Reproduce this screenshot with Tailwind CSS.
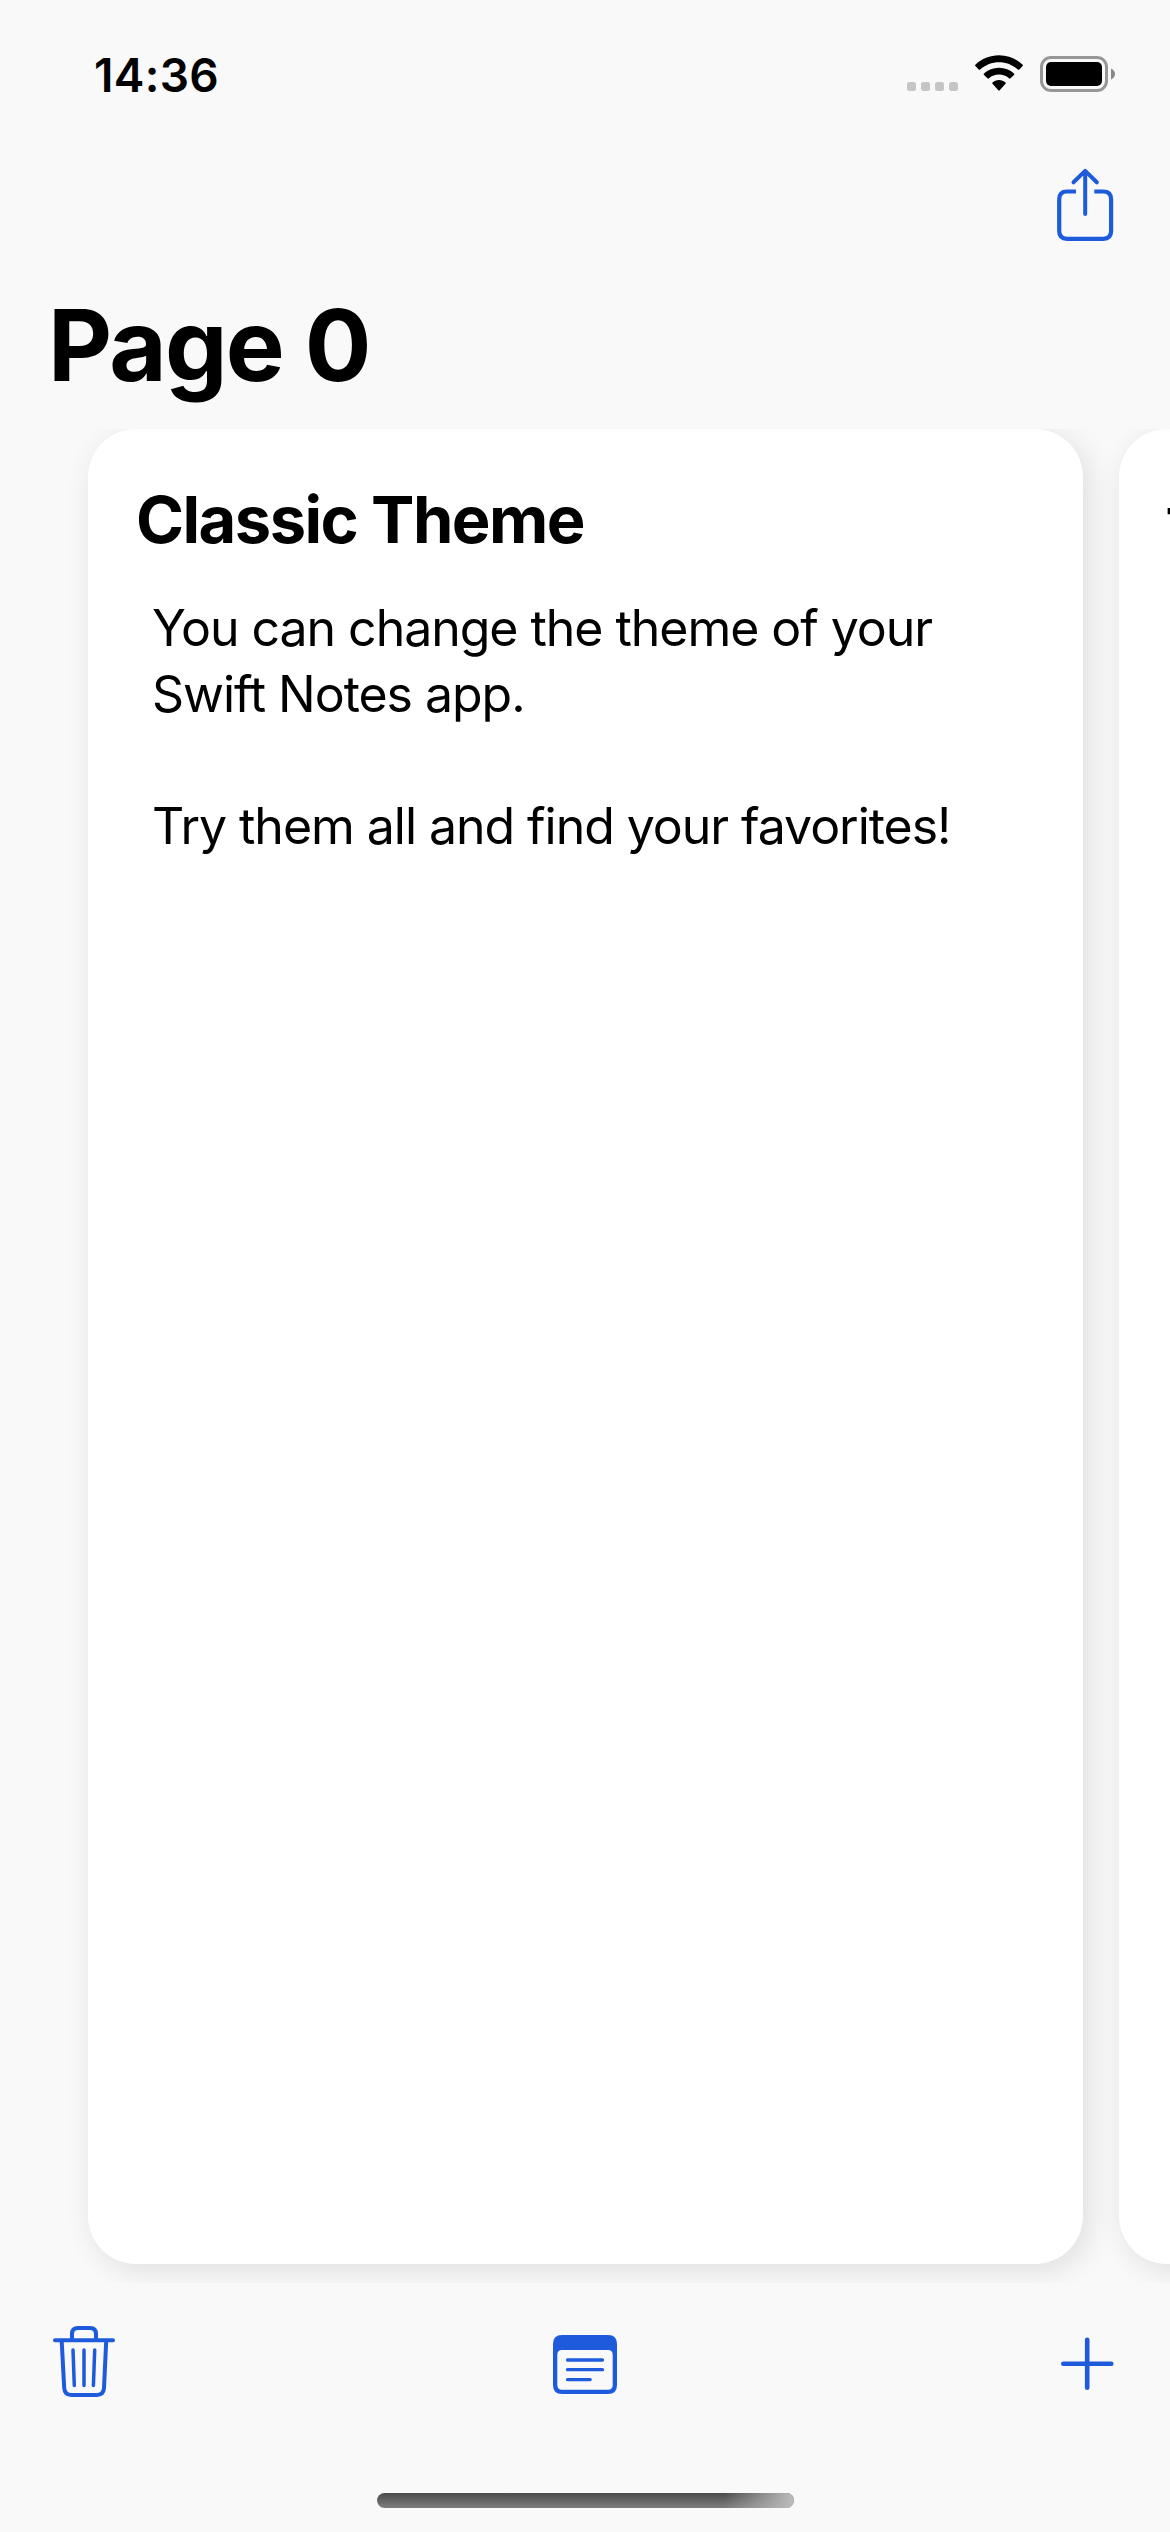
<!DOCTYPE html>
<html lang="en">
<head>
<meta charset="utf-8">
<title>Swift Notes</title>
<script src="https://cdn.jsdelivr.net/npm/@tailwindcss/browser@4"></script>
</head>
<body class="bg-[#f9f9f9] text-black font-['Inter',sans-serif]">
<div class="w-[1170px] h-[2532px] flex flex-col overflow-hidden">
  <!-- Status bar -->
  <header class="h-[141px] shrink-0 flex items-start justify-between pl-[94px] pr-[54px] pt-[48px]">
    <div class="text-[46px] leading-[54px] font-semibold tracking-[0.3px]">14:36</div>
    <svg class="w-[210px] h-[40px] mt-[4px]" viewBox="906 52 210 40">
      <g fill="#c5c5c5">
        <rect x="907" y="82" width="9" height="9" rx="2.5"/><rect x="921" y="82" width="9" height="9" rx="2.5"/><rect x="935" y="82" width="9" height="9" rx="2.5"/><rect x="949" y="82" width="9" height="9" rx="2.5"/>
      </g>
      <path d="M999 55.2C1008 55.2 1016.500 58.700 1022.600 64.700Q1023.300 65.400 1022.600 66.100L1019.300 69.500Q1018.500 70.200 1017.800 69.500C1012.500 64.700 1006 62.200 999 62.200S985.500 64.700 980.200 69.500Q979.500 70.200 978.700 69.500L975.400 66.100Q974.700 65.400 975.400 64.700C981.500 58.700 990 55.200 999 55.200ZM999 67.700C1004.800 67.700 1010 69.800 1014 73.500Q1014.700 74.200 1014 74.900L1010.500 78.300Q1009.800 79 1009 78.300C1006.200 75.900 1002.800 74.600 999 74.600S991.800 75.900 989 78.300Q988.200 79 987.500 78.300L984 74.900Q983.300 74.200 984 73.500C988 69.800 993.200 67.700 999 67.700ZM999 80C1001.500 80 1003.800 80.900 1005.500 82.400Q1006.200 83.100 1005.500 83.800L999.700 90.300Q999 91 998.300 90.300L992.500 83.800Q991.800 83.100 992.500 82.400C994.200 80.900 996.500 80 999 80Z"/>
      <rect x="1041.500" y="57.500" width="65" height="33" rx="9.500" fill="none" stroke="#979797" stroke-width="3"/>
      <rect x="1046" y="62" width="56" height="24" rx="5"/>
      <path d="M1111 68.500C1113.500 69.500 1115 71.500 1115 74S1113.500 78.500 1111 79.500Z" fill="#8a8a8a"/>
    </svg>
  </header>

  <!-- Navigation bar -->
  <nav class="h-[144px] shrink-0 flex justify-end items-start pr-[54px] pt-[26px]">
    <svg class="w-[60px] h-[76px]" viewBox="1056 167 60 76" fill="none" stroke="#1d5bdc" stroke-width="4.200">
      <path d="M1076 191.500H1067Q1059.200 191.500 1059.200 199.300V231Q1059.200 238.800 1067 238.800H1103.300Q1111.100 238.800 1111.100 231V199.300Q1111.100 191.500 1103.300 191.500H1094.300"/>
      <path d="M1085.200 214V171.500M1073.500 182.300L1085.200 170.900L1096.800 182.300" stroke-width="4" stroke-linecap="round" stroke-linejoin="round"/>
    </svg>
  </nav>
  <h1 class="h-[144px] shrink-0 pl-[48px] text-[99px] leading-[120px] font-bold tracking-[-1.7px]">Page 0</h1>

  <!-- Note cards -->
  <main class="h-[1854px] shrink-0 flex items-start gap-9 pl-[88px] overflow-hidden">
    <article class="w-[995px] h-[1835px] shrink-0 rounded-[48px] bg-white shadow-[6px_6px_30px_rgba(0,0,0,0.11)] pt-[52px] pl-[48px]">
      <h2 class="text-[65px] leading-[78px] font-bold tracking-[-1.55px]">Classic Theme</h2>
      <p class="pl-[16px] pt-[36px] text-[50px] leading-[66px] tracking-[-1.04px] whitespace-nowrap">You can change the theme of your<br>Swift Notes app.<br><br>Try them all and find your favorites!</p>
    </article>
    <article class="w-[995px] h-[1835px] shrink-0 rounded-[48px] bg-white shadow-[6px_6px_30px_rgba(0,0,0,0.11)] pt-[59px] pl-[48px]">
      <h2 class="text-[56px] leading-[78px] font-bold font-['Liberation_Sans',sans-serif]">T</h2>
    </article>
  </main>

  <!-- Toolbar -->
  <footer class="h-[162px] shrink-0 flex items-start justify-between pl-[50px] pr-[50px] pt-[37px]">
    <svg class="w-[70px] h-[84px]" viewBox="50 2320 70 84" fill="none" stroke="#1d5bdc" stroke-width="4" stroke-linecap="round" stroke-linejoin="round">
      <path d="M55 2340.200H113M72 2339V2334Q72 2328 78 2328H90Q96 2328 96 2334V2339M61.700 2341L64.200 2388Q64.600 2395 71.500 2395H96.700Q103.600 2395 104 2388L106.200 2341"/>
      <path d="M73 2350L74.300 2385.500M84 2350V2385.500M94.700 2350L93.400 2385.500" stroke-width="3.500"/>
    </svg>
    <svg class="w-[70px] h-[84px]" viewBox="550 2320 70 84">
      <path fill="#1d5bdc" fill-rule="evenodd" d="M562 2335H608Q617 2335 617 2344V2385Q617 2394 608 2394H562Q553 2394 553 2385V2344Q553 2335 562 2335ZM562 2350Q557.300 2350 557.300 2355V2385Q557.300 2389.700 562 2389.700H608Q612.700 2389.700 612.700 2385V2355Q612.700 2350 608 2350Z"/>
      <path d="M567.500 2360H602.500M567.500 2369.700H602.500M567.500 2379.600H590.200" stroke="#1d5bdc" stroke-width="3.300" stroke-linecap="round"/>
    </svg>
    <svg class="w-[70px] h-[84px]" viewBox="1050 2320 70 84" stroke="#1d5bdc" stroke-width="4.600" stroke-linecap="round">
      <path d="M1063.300 2363.700H1111.300M1087.200 2339.700V2387.700"/>
    </svg>
  </footer>

  <!-- Home indicator -->
  <div class="flex justify-center pt-[48px]">
    <div class="w-[417px] h-[15px] rounded-full overflow-hidden bg-linear-to-b from-[#4b4b4b] to-[#7e7e7e]">
      <div class="ml-auto w-[70px] h-full bg-linear-to-r from-transparent to-[#bdbdbd]"></div>
    </div>
  </div>
</div>
</body>
</html>
